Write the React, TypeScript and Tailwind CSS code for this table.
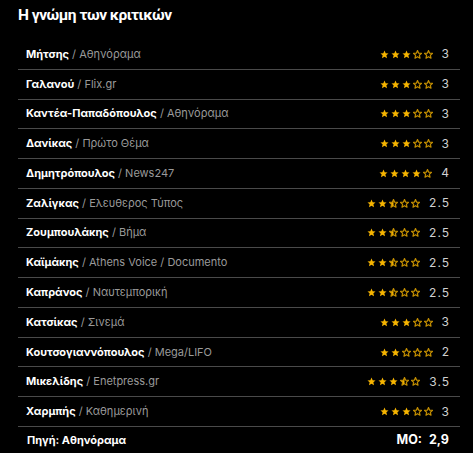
import React from "react";

const rows: { name: string; src: string; score: number; label: string }[] = [
  { name: "Μήτσης", src: "Αθηνόραμα", score: 3, label: "3" },
  { name: "Γαλανού", src: "Flix.gr", score: 3, label: "3" },
  { name: "Καντέα-Παπαδόπουλος", src: "Αθηνόραμα", score: 3, label: "3" },
  { name: "Δανίκας", src: "Πρώτο Θέμα", score: 3, label: "3" },
  { name: "Δημητρόπουλος", src: "News247", score: 4, label: "4" },
  { name: "Ζαλίγκας", src: "Ελευθερος Τύπος", score: 2.5, label: "2.5" },
  { name: "Ζουμπουλάκης", src: "Βήμα", score: 2.5, label: "2.5" },
  { name: "Καϊμάκης", src: "Athens Voice / Documento", score: 2.5, label: "2.5" },
  { name: "Καπράνος", src: "Ναυτεμπορική", score: 2.5, label: "2.5" },
  { name: "Κατσίκας", src: "Σινεμά", score: 3, label: "3" },
  { name: "Κουτσογιαννόπουλος", src: "Mega/LIFO", score: 2, label: "2" },
  { name: "Μικελίδης", src: "Enetpress.gr", score: 3.5, label: "3.5" },
  { name: "Χαρμπής", src: "Καθημερινή", score: 3, label: "3" },
];

const STAR = "M5 0.6 L6.3 3.5 L9.5 3.8 L7.1 5.9 L7.8 9.1 L5 7.4 L2.2 9.1 L2.9 5.9 L0.5 3.8 L3.7 3.5 Z";

function Star({ kind, id }: { kind: "full" | "half" | "empty"; id: string }) {
  return (
    <svg width="9" height="9" viewBox="0 0 10 10" className="shrink-0">
      <defs>
        <clipPath id={id}>
          <rect x="0" y="0" width="5" height="10" />
        </clipPath>
      </defs>
      {kind === "full" ? (
        <path d={STAR} fill="#f6b400" />
      ) : (
        <>
          {kind === "half" && <path d={STAR} fill="#f6b400" clipPath={`url(#${id})`} />}
          <path d={STAR} fill="none" stroke="#c48f00" strokeWidth="1.3" strokeLinejoin="round" />
        </>
      )}
    </svg>
  );
}

function Stars({ score, idx }: { score: number; idx: number }) {
  return (
    <div className="flex items-center gap-[2px]">
      {[0, 1, 2, 3, 4].map((i) => {
        const kind = score >= i + 1 ? "full" : score >= i + 0.5 ? "half" : "empty";
        return <Star key={i} kind={kind} id={`c${idx}-${i}`} />;
      })}
    </div>
  );
}

export default function App() {
  return (
    <div
      className="w-[473px] h-[453px] bg-black text-white overflow-hidden"
      style={{ fontFamily: "Inter, 'Noto Sans', sans-serif" }}
    >
      <div className="h-[40px] pl-[18px] pt-[4px]">
        <h1
          className="text-[15.5px] leading-[22px] font-bold tracking-[-0.5px] text-white"
          style={{ fontFamily: "Roboto, 'Noto Sans', sans-serif" }}
        >
          Η γνώμη των κριτικών
        </h1>
      </div>
      <div className="ml-[18px] w-[442px]">
        {rows.map((r, i) => (
          <div
            key={i}
            className="h-[29.77px] flex items-center justify-between border-b border-[#4a4a4a] pl-[8px] pr-[10px]"
          >
            <div className="text-[11px] leading-none">
              <span className="font-bold text-white">{r.name}</span>
              <span className="text-[#9a9a9a]"> / {r.src}</span>
            </div>
            <div className="flex items-center gap-[9px]">
              <Stars score={r.score} idx={i} />
              <span className="text-[12px] leading-none text-[#d0d0d0] tracking-[1px]">{r.label}</span>
            </div>
          </div>
        ))}
        <div className="h-[26px] flex items-center justify-between pl-[9px] pr-[11px]">
          <span className="text-[11px] font-bold text-white">Πηγή: Αθηνόραμα</span>
          <span className="text-[12.5px] font-bold text-white">
            ΜΟ:<span className="ml-[7px]">2,9</span>
          </span>
        </div>
      </div>
    </div>
  );
}
